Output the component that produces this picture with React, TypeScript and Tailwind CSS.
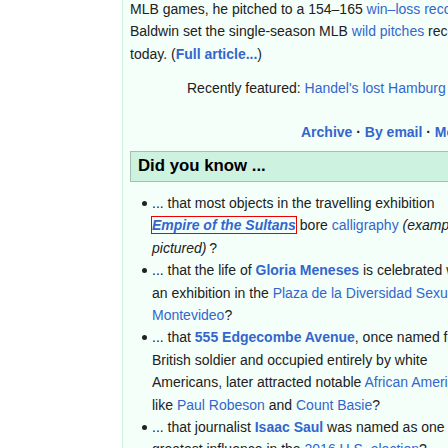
const link = "text-[#3366cc]";
const bullet =
  "relative before:absolute before:left-[-10px] before:top-[9px] before:size-[5px] before:rounded-full before:bg-[#202122] before:content-['']";

export default function App() {
  return (
    <div className="flex h-[448px] w-[448px] overflow-hidden bg-white font-['Liberation_Sans',Arial,sans-serif] text-[14px] leading-[1.6] text-[#202122]">
      <div className="w-[122px] shrink-0" />
      <div className="shrink-0 border-l border-[#cef2e0] bg-[#f5fffa] pl-[7px] pr-[8px]">
        <div className="-mt-[2px] w-[359px]">
          <p className="whitespace-nowrap">
            MLB games, he pitched to a 154–165 <a className={link}>win–loss record</a> and a 3.36 ERA.
            <br />
            Baldwin set the single-season MLB <a className={link}>wild pitches</a> record that stands
            <br />
            today. (<a className={`${link} font-bold`}>Full article...</a>)
          </p>
          <div className="mt-[12px] whitespace-nowrap pl-[57px]">
            Recently featured: <a className={link}>Handel's lost Hamburg operas</a> · Albert Cecil Shorey
          </div>
          <div className="mt-[21px] whitespace-nowrap pl-[171px] font-bold">
            <a className={link}>Archive</a> · <a className={link}>By email</a> ·{" "}
            <a className={link}>More featured articles</a>
          </div>
          <h2 className="mt-[8px] w-[420px] border border-[#a3bfb1] bg-[#cef2e0] px-[7px] py-[3.4px] text-[16.8px] font-bold leading-[1.33] text-black">
            Did you know ...
          </h2>
          <ul className="mt-[10px] list-none pl-[22px]">
            <li className={bullet}>
              ... that most objects in the travelling exhibition{" "}
              <span className="whitespace-nowrap outline outline-1 outline-[#ee0000]">
                <a className={`${link} font-bold italic`}>Empire of the Sultans</a>
              </span>{" "}
              bore <a className={link}>calligraphy</a> <i>(example pictured)</i>&thinsp;?
            </li>
            <li className={bullet}>
              ... that the life of <a className={`${link} font-bold`}>Gloria Meneses</a> is celebrated
              with an exhibition in the <a className={link}>Plaza de la Diversidad Sexual</a> in{" "}
              <a className={link}>Montevideo</a>?
            </li>
            <li className={bullet}>
              ... that <a className={`${link} font-bold`}>555 Edgecombe Avenue</a>, once named for a
              British soldier and occupied entirely by white Americans, later attracted notable{" "}
              <a className={link}>African Americans</a> like <a className={link}>Paul Robeson</a> and{" "}
              <a className={link}>Count Basie</a>?
            </li>
            <li className={bullet}>
              ... that journalist <a className={`${link} font-bold`}>Isaac Saul</a> was named as one of
              the greatest influence in the <a className={link}>2016 U.S. election</a>?
            </li>
          </ul>
        </div>
      </div>
    </div>
  );
}
